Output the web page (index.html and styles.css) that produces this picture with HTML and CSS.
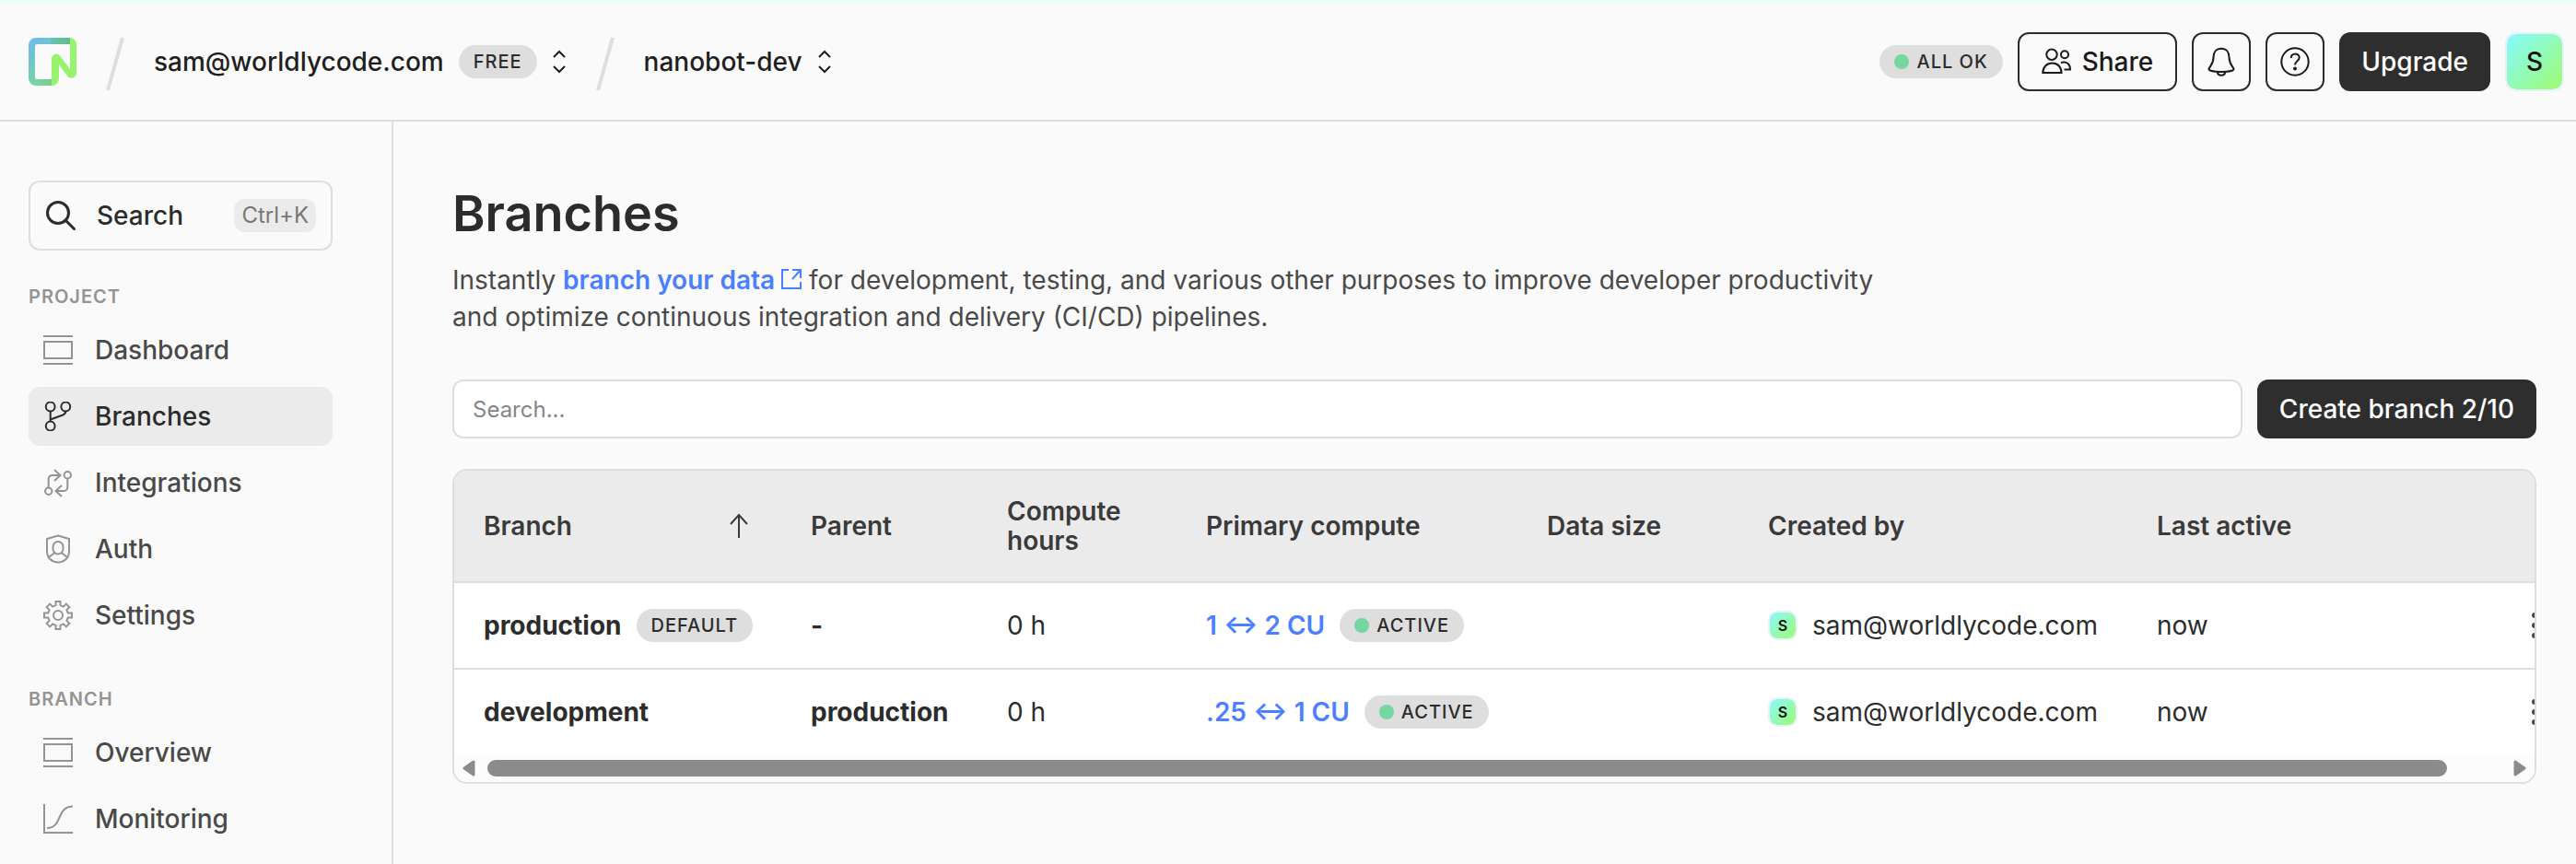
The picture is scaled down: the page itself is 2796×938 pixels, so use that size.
FILE: index.html
```html
<!DOCTYPE html>
<html lang="en">
<head>
<meta charset="utf-8">
<title>Branches</title>
<link rel="stylesheet" href="styles.css">
</head>
<body>
<svg class="sprite" aria-hidden="true">
  <symbol id="updown" viewBox="0 0 16 28"><path d="M2 9l6-6 6 6M2 19l6 6 6-6"/></symbol>
  <symbol id="slash" viewBox="0 0 20 62"><path d="M18 5L2 62" stroke-width="4"/></symbol>
  <symbol id="panel" viewBox="0 0 32 32"><path d="M0 1h32M0 31h32M1 7h30v18H1z"/></symbol>
  <symbol id="kebab" viewBox="0 0 6 28"><g fill="currentColor" stroke="none"><circle cx="3" cy="3" r="3"/><circle cx="3" cy="14" r="3"/><circle cx="3" cy="25" r="3"/></g></symbol>
</svg>

<header class="topbar">
  <nav class="crumbs" aria-label="Breadcrumb">
    <a class="logo" href="#" aria-label="Home">
      <svg width="52" height="52" viewBox="0 0 52 52">
        <defs>
          <linearGradient id="frame" x1="0" y1="0" x2=".7" y2="1"><stop offset="0" stop-color="#6bb9f0"/><stop offset="1" stop-color="#7fdf86"/></linearGradient>
          <linearGradient id="fade" x1="0" x2="1"><stop offset="0" stop-color="#4fae78" stop-opacity="0"/><stop offset="1" stop-color="#5cae70" stop-opacity=".6"/></linearGradient>
        </defs>
        <path fill="url(#frame)" d="M8 0h38v7H9a2 2 0 0 0-2 2v34a2 2 0 0 0 2 2h17v7H8a8 8 0 0 1-8-8V8a8 8 0 0 1 8-8z"/>
        <path fill="url(#fade)" d="M24 0h21v7H24zM9 45h16v7H9z"/>
        <path fill="#96f36e" d="M45 0c4 0 7 3 7 8v30c0 5-6 7.500-9.500 4L33 29v15c0 4.500-3.500 8-8 8V23c0-5 6-7 9-3.500L45 34z"/>
      </svg>
    </a>
    <svg class="slash" width="20" height="62"><use href="#slash"/></svg>
    <button class="crumb">sam@worldlycode.com <span class="pill">FREE</span><svg width="16" height="28"><use href="#updown"/></svg></button>
    <svg class="slash" width="20" height="62"><use href="#slash"/></svg>
    <button class="crumb">nanobot-dev<svg width="16" height="28"><use href="#updown"/></svg></button>
  </nav>
  <div class="actions">
    <span class="pill"><i class="dot"></i>ALL OK</span>
    <button class="btn"><svg width="32" height="32" viewBox="0 0 32 32"><circle cx="11" cy="8.300" r="5.700"/><circle cx="25" cy="8.300" r="4"/><path d="M1.300 28h20.200c0-6-4-10.500-10-10.500S1.300 22 1.300 28zM21 17c6-2 10 1.500 10 7.500h-6.500"/></svg>Share</button>
    <button class="btn icon" aria-label="Notifications"><svg width="32" height="32" viewBox="0 0 32 32"><path d="M2.500 24c0 1.500 4.500 3 13.500 3s13.500-1.500 13.500-3c-.5-2.500-5-5-5-13 0-5.500-3-9.300-8.500-9.300S7.500 5.500 7.500 11c0 8-4.500 10.500-5 13zM11.500 27c1 5 8 5 9 0"/></svg></button>
    <button class="btn icon" aria-label="Help"><svg width="32" height="32" viewBox="0 0 32 32"><circle cx="16" cy="16" r="14.700"/><path d="M11.700 12c0-6 9-6 9-.5 0 3.500-4.700 4-4.700 8"/><circle cx="16" cy="23.500" r="1" fill="currentColor"/></svg></button>
    <button class="btn dark">Upgrade</button>
    <button class="avatar big" aria-label="Account">S</button>
  </div>
</header>

<div class="layout">
  <aside class="sidebar">
    <button class="find">
      <svg width="34" height="34" viewBox="0 0 34 34"><circle cx="14" cy="14" r="11.500"/><path d="M22 22l9.500 9.500"/></svg>
      <span class="find-label">Search</span><kbd>Ctrl+K</kbd>
    </button>
    <nav class="group" aria-labelledby="g1">
      <h2 id="g1">PROJECT</h2>
      <ul>
        <li><a href="#"><svg width="32" height="32"><use href="#panel"/></svg>Dashboard</a></li>
        <li><a href="#" class="current" aria-current="page"><svg width="32" height="32" viewBox="0 0 32 32"><circle cx="7.700" cy="5.500" r="4.900"/><circle cx="24.300" cy="5.500" r="4.900"/><circle cx="7.700" cy="26.500" r="4.900"/><path d="M7.700 10.500v11M24.300 10.500c0 2-1 3.200-3 4L7.700 19.500"/></svg>Branches</a></li>
        <li><a href="#"><svg width="32" height="32" viewBox="0 0 32 32"><circle cx="5.700" cy="25.300" r="3.700"/><circle cx="26.300" cy="7.800" r="3.700"/><path d="M5.700 21.500V12a4 4 0 0 1 4-4H18M12 2l6.500 6-6.500 6M26.300 11.500V21a4 4 0 0 1-4 4H14M20 19l-6.500 6 6.500 6"/></svg>Integrations</a></li>
        <li><a href="#"><svg width="32" height="32" viewBox="0 0 32 32"><path d="M16 1.500L28 5v13.500C28 26 22.500 30.500 16 30.500S4 26 4 18.500V5z"/><rect x="10.500" y="8" width="11" height="13.500" rx="5.500"/><path d="M12.500 20L6 25M19.500 20l6.500 5"/></svg>Auth</a></li>
        <li><a href="#"><svg width="32" height="32" viewBox="0 0 32 32"><path d="M13.500 1h5v4.200l3.370 1.400 2.970-2.970 3.530 3.530-2.970 2.970 1.400 3.370H31v5h-4.200l-1.400 3.370 2.970 2.970-3.530 3.530-2.970-2.970-3.370 1.400V31h-5v-4.200l-3.370-1.400-2.970 2.970-3.530-3.530 2.970-2.970-1.400-3.370H1v-5h4.200l1.400-3.370-2.970-2.970 3.530-3.530 2.970 2.970 3.370-1.400z"/><circle cx="16" cy="16" r="5"/></svg>Settings</a></li>
      </ul>
    </nav>
    <nav class="group" aria-labelledby="g2">
      <h2 id="g2">BRANCH</h2>
      <ul>
        <li><a href="#"><svg width="32" height="32"><use href="#panel"/></svg>Overview</a></li>
        <li><a href="#"><svg width="32" height="32" viewBox="0 0 32 32"><path d="M1 0v31h31M4 26C21 26 14 2.500 32 2.500"/></svg>Monitoring</a></li>
      </ul>
    </nav>
  </aside>

  <main class="content">
    <h1>Branches</h1>
    <p class="intro">Instantly <a href="#">branch your data <svg width="22" height="22" viewBox="1 1 22 22"><path d="M9 2H2v20h20v-7M13 2h9v9M22 2l-9 10"/></svg></a> for development, testing, and various other purposes to improve developer productivity and optimize continuous integration and delivery (CI/CD) pipelines.</p>
    <div class="toolbar">
      <input type="search" placeholder="Search..." aria-label="Search branches">
      <button class="btn dark">Create branch 2/10</button>
    </div>
    <section class="card">
      <table>
        <colgroup><col class="c-branch"><col class="c-parent"><col class="c-hours"><col class="c-compute"><col class="c-size"><col class="c-creator"><col class="c-active"><col class="c-menu"></colgroup>
        <thead>
          <tr>
            <th><span class="sort">Branch<svg width="28" height="28" viewBox="0 0 28 28"><path d="M14 27V2M5 12l9-10 9 10"/></svg></span></th>
            <th>Parent</th><th>Compute hours</th><th>Primary compute</th><th>Data size</th><th>Created by</th><th>Last active</th><th></th>
          </tr>
        </thead>
        <tbody>
          <tr>
            <td><span class="cell"><b>production</b><span class="pill">DEFAULT</span></span></td>
            <td><b>-</b></td><td>0 h</td>
            <td><span class="cell"><a href="#">1 ↔ 2 CU</a><span class="pill"><i class="dot"></i>ACTIVE</span></span></td>
            <td></td>
            <td><span class="cell"><span class="avatar">S</span>sam@worldlycode.com</span></td>
            <td>now</td>
            <td class="menu"><button aria-label="Actions for production"><svg width="6" height="28"><use href="#kebab"/></svg></button></td>
          </tr>
          <tr>
            <td><b>development</b></td>
            <td><b>production</b></td><td>0 h</td>
            <td><span class="cell"><a href="#">.25 ↔ 1 CU</a><span class="pill"><i class="dot"></i>ACTIVE</span></span></td>
            <td></td>
            <td><span class="cell"><span class="avatar">S</span>sam@worldlycode.com</span></td>
            <td>now</td>
            <td class="menu"><button aria-label="Actions for development"><svg width="6" height="28"><use href="#kebab"/></svg></button></td>
          </tr>
        </tbody>
      </table>
      <div class="scrollbar" aria-hidden="true">
        <svg width="14" height="18" viewBox="0 0 14 18"><path d="M12 2v14L2 9z"/></svg>
        <div class="track"><div class="thumb"></div></div>
        <svg width="14" height="18" viewBox="0 0 14 18"><path d="M2 2v14l10-7z"/></svg>
      </div>
    </section>
  </main>
</div>
</body>
</html>
```
FILE: styles.css
```css
* { box-sizing: border-box; }

body {
  margin: 0;
  min-height: 100vh;
  display: flex;
  flex-direction: column;
  border-top: 4px solid #e9fcf5;
  background: #fafafa;
  color: #2c2c2c;
  font: 400 28px/40px Inter, "Liberation Sans", sans-serif;
}

.sprite { display: none; }
svg { flex: none; fill: none; stroke: currentColor; stroke-width: 2; }
button { font: inherit; color: inherit; cursor: pointer; background: none; border: 0; padding: 0; }
a { color: #4a80ff; text-decoration: none; }
b { font-weight: 700; }

/* Top bar */
.topbar {
  display: flex;
  align-items: center;
  justify-content: space-between;
  height: 128px;
  padding: 0 13px 0 31px;
  border-bottom: 2px solid #dedede;
}
.crumbs, .actions { display: flex; align-items: center; }
.crumbs { gap: 32px; }
.actions { gap: 16px; }
.logo { display: flex; }
.logo svg { stroke: none; }
.slash { color: #dedede; }
.crumb { display: flex; align-items: center; gap: 16px; font-weight: 500; color: #1f1f1f; }

.pill {
  display: inline-flex;
  align-items: center;
  gap: 8px;
  height: 36px;
  padding: 0 16px;
  border-radius: 18px;
  background: #dedede;
  color: #2c2c2c;
  font-size: 20px;
  font-weight: 500;
  line-height: 36px;
  letter-spacing: 1px;
  white-space: nowrap;
}
.dot { width: 16px; height: 16px; border-radius: 50%; background: #73d79f; }

.btn {
  display: flex;
  align-items: center;
  justify-content: center;
  gap: 12px;
  height: 64px;
  padding: 0 24px;
  border: 2px solid #2c2c2c;
  border-radius: 12px;
  color: #1a1a1a;
  font-weight: 500;
  white-space: nowrap;
}
.btn.icon { width: 64px; padding: 0; }
.btn.dark { padding: 0 22px; background: #2e2e2e; border-color: #2e2e2e; color: #fff; }

.avatar {
  display: flex;
  align-items: center;
  justify-content: center;
  width: 32px;
  height: 32px;
  border: 2px solid #e9f0fd;
  border-radius: 10px;
  background: linear-gradient(135deg, #86fbff, #9ffb70) padding-box;
  color: #111;
  font-size: 16px;
  font-weight: 600;
}
.avatar.big { width: 64px; height: 64px; border-radius: 12px; font-size: 28px; font-weight: 500; }

.layout { display: flex; flex: 1; }

/* Sidebar */
.sidebar {
  flex: none;
  width: 427px;
  padding: 64px 64px 0 31px;
  border-right: 2px solid #dedede;
}
.find {
  display: flex;
  align-items: center;
  width: 100%;
  height: 76px;
  padding: 0 16px;
  gap: 22px;
  border: 2px solid #dedede;
  border-radius: 12px;
  font-weight: 500;
}
.find svg { stroke-width: 3; stroke-linecap: round; }
.find-label { flex: 1; text-align: left; }
kbd {
  height: 36px;
  padding: 0 8px;
  border-radius: 12px;
  background: #ebebeb;
  color: #777;
  font: 400 24px/36px Inter, sans-serif;
}
.group { margin-top: 36px; }
.group + .group { margin-top: 45px; }
.group h2 {
  margin: 0 0 12px;
  color: #949494;
  font-size: 20px;
  font-weight: 600;
  line-height: 28px;
  letter-spacing: 1px;
}
.group ul { display: flex; flex-direction: column; gap: 8px; margin: 0; padding: 0; list-style: none; }
.group a {
  display: flex;
  align-items: center;
  gap: 24px;
  height: 64px;
  padding: 0 16px;
  border-radius: 12px;
  color: #494949;
  font-weight: 500;
}
.group svg { color: #949494; }
.group .current, .group .current svg { color: #2c2c2c; }
.group .current { background: #ebebeb; }

/* Content */
.content { flex: 1; min-width: 0; padding: 68px 43px 48px 64px; }
h1 { margin: 0 0 20px; font-size: 54px; line-height: 64px; font-weight: 600; }
.intro { max-width: 1560px; margin: 0; color: #494949; }
.intro a { font-weight: 600; }
.toolbar { display: flex; gap: 16px; margin: 48px 0 33px; }
.toolbar input {
  flex: 1;
  min-width: 0;
  height: 64px;
  padding: 0 20px;
  border: 2px solid #dedede;
  border-radius: 12px;
  background: #fff;
  font: 400 24px/32px Inter, sans-serif;
}
.toolbar input::placeholder { color: #868686; opacity: 1; }

.card { overflow: hidden; border: 2px solid #dedede; border-radius: 16px; background: #fff; }
table { width: 103%; table-layout: fixed; border-collapse: separate; border-spacing: 0; }
.c-branch { width: 355px; }
.c-parent { width: 213px; }
.c-hours { width: 216px; }
.c-compute { width: 370px; }
.c-size { width: 240px; }
.c-creator { width: 422px; }
.c-active { width: 374px; }
.c-menu { width: 136px; }
th, td { padding: 0 32px; text-align: left; white-space: nowrap; }
th {
  height: 122px;
  border-bottom: 2px solid #dedede;
  background: #ebebeb;
  color: #3a3a3a;
  font-weight: 600;
  line-height: 32px;
  white-space: normal;
}
td { height: 92px; }
tr:not(:last-child) td { height: 94px; border-bottom: 2px solid #dedede; }
.sort { display: flex; align-items: center; justify-content: space-between; }
.cell { display: flex; align-items: center; gap: 16px; }
.cell a { font-weight: 600; }
.menu { padding: 0; text-align: center; }
.menu button { display: flex; justify-content: center; width: 100%; color: #494949; }

.scrollbar { display: flex; align-items: center; gap: 13px; height: 30px; padding: 0 9px; background: #fcfcfc; }
.scrollbar svg { color: #8b8b8b; fill: currentColor; stroke-width: 3; stroke-linejoin: round; }
.track { flex: 1; }
.thumb { width: 97.3%; height: 18px; border-radius: 9px; background: #8b8b8b; }
```
